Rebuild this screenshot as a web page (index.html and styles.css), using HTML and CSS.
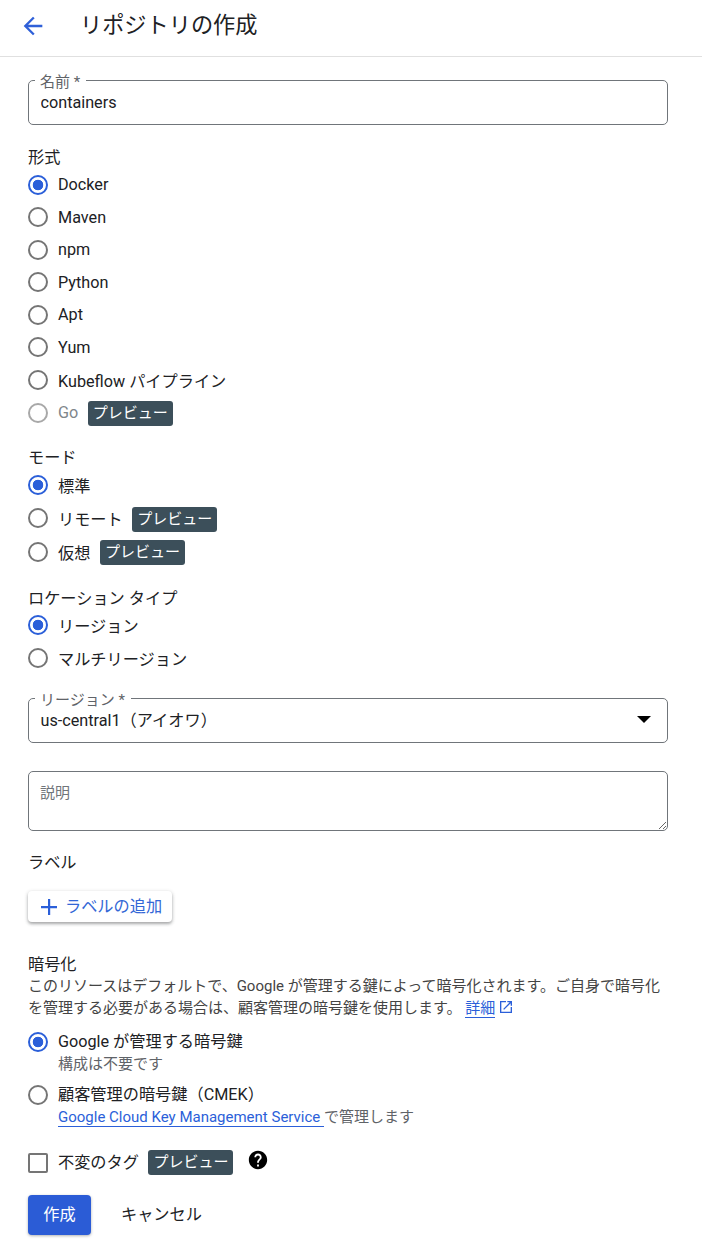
FILE: index.html
```html
<!DOCTYPE html>
<html lang="ja">
<head>
<meta charset="utf-8">
<title>リポジトリの作成</title>
<link rel="stylesheet" href="styles.css">
</head>
<body>
<header class="topbar">
  <svg class="back" viewBox="0 0 24 24"><path d="M20 11H7.83l5.59-5.59L12 4l-8 8 8 8 1.41-1.41L7.83 13H20v-2z"/></svg>
  <h1 class="title">リポジトリの作成</h1>
</header>
<main class="form">
  <fieldset class="field">
    <legend class="legend">名前 *</legend>
    <input class="field-input" type="text" value="containers">
  </fieldset>

  <section class="group group-format">
    <div class="group-label">形式</div>
    <label class="row"><input class="radio" type="radio" name="f" checked><span>Docker</span></label>
    <label class="row"><input class="radio" type="radio" name="f"><span>Maven</span></label>
    <label class="row"><input class="radio" type="radio" name="f"><span>npm</span></label>
    <label class="row"><input class="radio" type="radio" name="f"><span>Python</span></label>
    <label class="row"><input class="radio" type="radio" name="f"><span>Apt</span></label>
    <label class="row"><input class="radio" type="radio" name="f"><span>Yum</span></label>
    <label class="row"><input class="radio" type="radio" name="f"><span>Kubeflow パイプライン</span></label>
    <label class="row row-chip row-disabled"><input class="radio" type="radio" name="f" disabled><span>Go</span><span class="chip">プレビュー</span></label>
  </section>

  <section class="group group-mode">
    <div class="group-label">モード</div>
    <label class="row"><input class="radio" type="radio" name="m" checked><span>標準</span></label>
    <label class="row row-chip"><input class="radio" type="radio" name="m"><span>リモート</span><span class="chip">プレビュー</span></label>
    <label class="row row-chip"><input class="radio" type="radio" name="m"><span>仮想</span><span class="chip">プレビュー</span></label>
  </section>

  <section class="group group-location">
    <div class="group-label">ロケーション タイプ</div>
    <label class="row"><input class="radio" type="radio" name="l" checked><span>リージョン</span></label>
    <label class="row"><input class="radio" type="radio" name="l"><span>マルチリージョン</span></label>
  </section>

  <fieldset class="field field-select">
    <legend class="legend">リージョン *</legend>
    <div class="select-value">
      <span>us-central1（アイオワ）</span>
      <svg class="caret" viewBox="0 0 14 7"><path d="M0 0h14L7 7z"/></svg>
    </div>
  </fieldset>

  <textarea class="description" placeholder="説明"></textarea>

  <div class="group-label label-heading">ラベル</div>
  <button class="add-label" type="button">
    <svg class="plus" viewBox="0 0 16 16"><path d="M7 0h2.2v7H16v2.2H9.2V16H7V9.2H0V7h7z"/></svg>
    <span class="add-label-text">ラベルの追加</span>
  </button>

  <section class="encryption">
    <div class="group-label">暗号化</div>
    <p class="enc-text">このリソースはデフォルトで、Google が管理する鍵によって暗号化されます。ご自身で暗号化<br>を管理する必要がある場合は、顧客管理の暗号鍵を使用します。 <a class="link">詳細</a><svg class="ext" viewBox="0 0 24 24"><path d="M19 19H5V5h7V3H3v18h18v-9h-2v7zM14 3v2h3.59l-9.83 9.83 1.41 1.41L19 6.41V10h2V3h-7z"/></svg></p>
    <label class="enc-option">
      <input class="radio" type="radio" name="e" checked>
      <span class="enc-body"><span class="enc-title">Google が管理する暗号鍵</span><span class="enc-sub">構成は不要です</span></span>
    </label>
    <label class="enc-option enc-option-second">
      <input class="radio" type="radio" name="e">
      <span class="enc-body"><span class="enc-title">顧客管理の暗号鍵（CMEK）</span><span class="enc-sub"><a class="link">Google Cloud Key Management Service </a>で管理します</span></span>
    </label>
  </section>

  <div class="tags">
    <input class="check" type="checkbox">
    <span class="tag-label">不変のタグ</span>
    <span class="chip">プレビュー</span>
    <svg class="help" viewBox="0 0 24 24"><path d="M12 2C6.48 2 2 6.48 2 12s4.48 10 10 10 10-4.48 10-10S17.52 2 12 2zm1 17h-2v-2h2v2zm2.07-7.75l-.9.92C13.45 12.9 13 13.5 13 15h-2v-.5c0-1.1.45-2.1 1.17-2.83l1.24-1.26c.37-.36.59-.86.59-1.41 0-1.1-.9-2-2-2s-2 .9-2 2H8c0-2.21 1.79-4 4-4s4 1.79 4 4c0 .88-.36 1.68-.93 2.25z"/></svg>
  </div>

  <div class="actions">
    <button class="primary" type="button">作成</button>
    <button class="cancel" type="button">キャンセル</button>
  </div>
</main>
</body>
</html>
```
FILE: styles.css
```css
* { box-sizing: border-box; }
html, body { margin: 0; padding: 0; background: #fff; }
body {
  font-family: Roboto, "Noto Sans CJK JP", sans-serif;
  font-size: 16.2px;
  color: #202124;
  height: 1253px;
  overflow: hidden;
}
.topbar {
  height: 57px;
  border-bottom: 1px solid #e0e0e0;
  display: flex;
  align-items: center;
  padding: 0 0 6px 19px;
}
.back { width: 28px; height: 28px; fill: #2f60d8; flex: none; margin-top: 2px; }
.title { margin: 0 0 0 33px; font-size: 22.2px; font-weight: 400; line-height: 28px; color: #202124; }
.form { padding: 16px 34px 0 28px; }

.field {
  margin: 0;
  padding: 0 12px 0 6px;
  height: 52px;
  border: 1px solid #70757a;
  border-radius: 5px;
  min-width: 0;
}
.legend {
  padding: 0 6px 0 5px;
  font-size: 15px;
  line-height: 14px;
  color: #5f6368;
  transform: translateY(1.5px);
}
.field-input {
  display: block;
  width: 100%;
  margin-top: 5px;
  padding: 0 0 0 5.5px;
  border: 0;
  outline: 0;
  font: inherit;
  line-height: 22px;
  height: 22px;
  color: #202124;
  background: transparent;
}
.field-select { margin-top: 17px; }
.select-value {
  display: flex;
  justify-content: space-between;
  align-items: center;
  margin-top: 5px;
  padding: 0 4px 0 5.5px;
  height: 22px;
  line-height: 22px;
}
.caret { width: 14px; height: 7px; fill: #000; margin-top: -3px; }

.group-label { line-height: 22px; height: 22px; }
.group-format { margin-top: 21.5px; }
.group-mode { margin-top: 17px; }
.group-location { margin-top: 19px; }
.group-mode .group-label { height: 22.5px; }
.group-location .group-label { height: 21.5px; }

.row {
  display: flex;
  align-items: center;
  height: 32.5px;
  color: #202124;
}
.row-chip { height: 33.5px; }
.row-disabled { color: #80868b; }
.radio {
  appearance: none;
  flex: none;
  width: 20px;
  height: 20px;
  margin: 0 10px 0 0;
  border: 2px solid #757575;
  border-radius: 50%;
  background: #fff;
}
.radio:checked {
  border-color: #2b5fd9;
  background: radial-gradient(circle, #2b5fd9 0 5px, transparent 5.6px);
}
.radio:disabled { border-color: #a8a8a8; }

.chip {
  display: inline-block;
  margin-left: 9.5px;
  padding: 0 5px;
  height: 25px;
  line-height: 24px;
  font-size: 15px;
  color: #fff;
  background: #3c4f5a;
  border-radius: 3px;
}
.row .chip { margin-top: 2px; }

.description {
  display: block;
  width: 640px;
  height: 60px;
  margin: 28px 0 0;
  padding: 10px 11px;
  border: 1px solid #70757a;
  border-radius: 5px;
  outline: 0;
  font: inherit;
  font-size: 15px;
  line-height: 22px;
  color: #202124;
}
.description::placeholder { color: #70757a; opacity: 1; }
.label-heading { margin-top: 20px; padding-top: 1px; height: 23px; }
.add-label {
  display: flex;
  align-items: center;
  width: 144px;
  height: 31px;
  margin-top: 17px;
  padding: 0 0 0 13px;
  border: 0;
  border-radius: 4px;
  background: #fff;
  font: inherit;
  color: #3367d6;
  box-shadow: 0 2px 3px rgba(60,64,67,.35), 0 1px 4px rgba(60,64,67,.2);
}
.add-label-text { padding-bottom: 3px; }
.plus { width: 16px; height: 16px; fill: #2b5fd9; margin-right: 8px; flex: none; }

.encryption { margin-top: 32px; }
.enc-text {
  margin: -1px 0 0;
  font-size: 15px;
  line-height: 22px;
  color: #444;
  white-space: nowrap;
}
.link { color: #2b5fd9; border-bottom: 1px solid #2b5fd9; }
.ext { width: 16px; height: 16px; fill: #2b5fd9; vertical-align: -2px; margin-left: 3px; }
.enc-option { display: flex; align-items: flex-start; margin-top: 12px; }
.enc-option-second { margin-top: 9px; }
.enc-option .radio { margin-top: 1px; }
.enc-body { display: flex; flex-direction: column; }
.enc-title { line-height: 22px; height: 22px; color: #202124; }
.enc-sub { line-height: 22px; height: 22px; font-size: 15px; color: #5f6368; white-space: nowrap; }

.tags {
  display: flex;
  align-items: center;
  height: 25px;
  margin-top: 22px;
  color: #202124;
}
.tag-label { padding-bottom: 4px; }
.check {
  appearance: none;
  flex: none;
  width: 20px;
  height: 20px;
  margin: 0 10px 0 0;
  border: 2px solid #757575;
  border-radius: 2px;
  background: #fff;
}
.help { width: 22px; height: 22px; fill: #000; margin: -6px 0 0 14px; flex: none; }

.actions { display: flex; align-items: center; margin-top: 20px; }
.primary {
  width: 63px;
  height: 40px;
  padding: 0 0 5px;
  border: 0;
  border-radius: 4px;
  background: #2b5cd6;
  color: #fff;
  font: inherit;
  box-shadow: 0 1px 3px rgba(60,64,67,.4);
}
.cancel {
  margin-left: 30px;
  padding: 0 0 4px;
  border: 0;
  background: transparent;
  font: inherit;
  color: #202124;
}
```
